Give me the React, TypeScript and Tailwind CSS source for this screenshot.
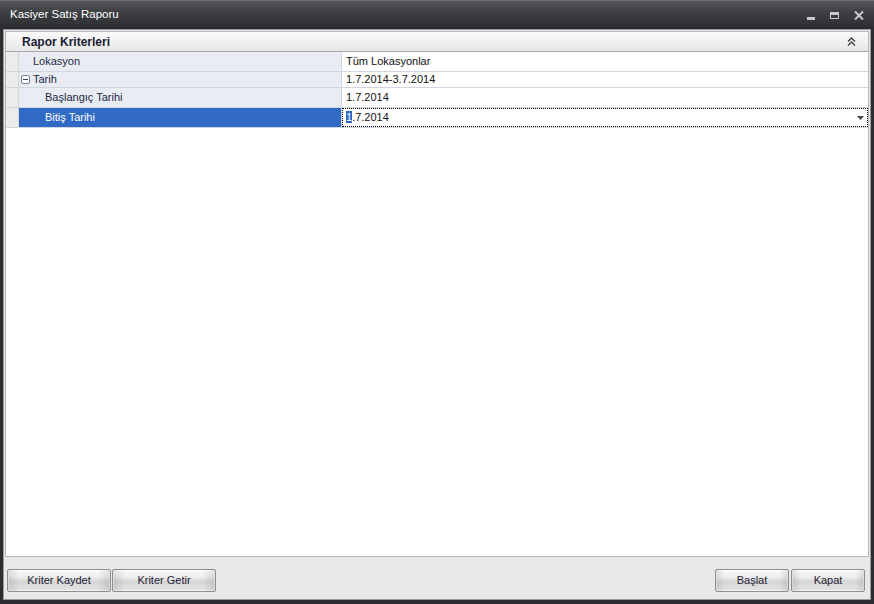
import React from "react";

const font = { fontFamily: '"Liberation Sans", Arial, sans-serif' };

function Btn({ label, w }: { label: string; w: string }) {
  return (
    <div
      className={`${w} h-[23px] flex items-center justify-center rounded-[2px] border border-[#8e8f91] text-[11px] text-[#1e2236] bg-[linear-gradient(to_bottom,#fafafa_0%,#ececec_35%,#d6d6d6_55%,#e4e4e4_100%)] shadow-[inset_0_0_0_1px_rgba(255,255,255,0.6)]`}
    >
      <div className="w-full h-full flex items-center justify-center bg-[linear-gradient(to_right,rgba(0,0,0,0.1)_0%,rgba(0,0,0,0)_12%,rgba(0,0,0,0)_88%,rgba(0,0,0,0.1)_100%)]">
        {label}
      </div>
    </div>
  );
}

function Row({
  label,
  value,
  indent,
  h,
  expander,
  selected,
}: {
  label: string;
  value: React.ReactNode;
  indent: string;
  h: string;
  expander?: boolean;
  selected?: boolean;
}) {
  return (
    <div className={`flex ${h} border-b border-[#d0d6e2]`}>
      <div className="w-[13px] shrink-0 bg-[#ececec] border-r border-[#d6d6d6]" />
      <div
        className={`w-[323px] shrink-0 flex items-center ${indent} border-r border-[#d0d6e2] ${
          selected ? "bg-[#316ac5] text-white" : "bg-[#e9ecf3] text-[#1c2a44]"
        }`}
      >
        {expander && (
          <span className="mr-[3px] -ml-[12px] w-[9px] h-[9px] border border-[#7a8094] rounded-[2px] flex items-center justify-center bg-white">
            <span className="w-[5px] h-[1px] bg-[#3b4154]" />
          </span>
        )}
        {label}
      </div>
      <div className="flex-1 flex items-center bg-white text-[#111]">{value}</div>
    </div>
  );
}

export default function App() {
  return (
    <div
      className="w-[874px] h-[604px] flex flex-col bg-[#2d2e31] text-[11px]"
      style={font}
    >
      {/* title bar */}
      <div className="h-[27px] shrink-0 flex items-center border-t border-[#6f7074] bg-[linear-gradient(to_bottom,#55565a_0%,#3d3e42_45%,#2f3034_100%)]">
        <div className="pl-[10px] text-white text-[11.5px] flex-1 pt-[2px]">
          Kasiyer Satış Raporu
        </div>
        <div className="flex items-center gap-[15px] pr-[10px] pt-[3px]">
          <div className="w-[8px] h-[3px] bg-[#c9cacd] mt-[6px]" />
          <div className="w-[9px] h-[7px] border border-[#c9cacd] border-t-[3px]" />
          <svg width="10" height="9" viewBox="0 0 10 9">
            <path d="M1 0.5 L9 8.5 M9 0.5 L1 8.5" stroke="#c9cacd" strokeWidth="2" />
          </svg>
        </div>
      </div>
      <div className="h-[2px] shrink-0 bg-[#2a2b2e]" />
      {/* body */}
      <div className="flex-1 flex flex-col mx-[3px] mb-[4px] border border-[#9a9a9a] bg-[#e8e8e8]">
        <div className="flex-1 flex flex-col m-[1px] border border-[#b8b8b8] bg-white">
          {/* header */}
          <div className="h-[20px] shrink-0 flex items-center justify-between pl-[16px] pr-[12px] border-b border-[#a9a9a9] bg-[linear-gradient(to_bottom,#fafafa,#e7e7e7)]">
            <span className="font-bold text-[12px] text-[#1b2033]">Rapor Kriterleri</span>
            <svg width="9" height="9" viewBox="0 0 9 9">
              <path d="M1 4.5 L4.5 1 L8 4.5 M1 8.5 L4.5 5 L8 8.5" stroke="#3c3c3c" strokeWidth="1.3" fill="none" />
            </svg>
          </div>
          <Row label="Lokasyon" indent="pl-[14px]" h="h-[20px]" value={<span className="pl-[4px]">Tüm Lokasyonlar</span>} />
          <Row label="Tarih" indent="pl-[14px]" h="h-[16px]" expander value={<span className="pl-[4px]">1.7.2014-3.7.2014</span>} />
          <Row label="Başlangıç Tarihi" indent="pl-[26px]" h="h-[20px]" value={<span className="pl-[4px]">1.7.2014</span>} />
          <Row
            label="Bitiş Tarihi"
            indent="pl-[26px]"
            h="h-[20px]"
            selected
            value={
              <div className="w-full h-full flex items-center border border-dotted border-black">
                <span className="pl-[3px]">
                  <span className="bg-[#316ac5] text-white">1</span>.7.2014
                </span>
                <svg className="ml-auto mr-[3px]" width="7" height="4" viewBox="0 0 7 4">
                  <path d="M0 0 H7 L3.5 4 Z" fill="#444" />
                </svg>
              </div>
            }
          />
          <div className="flex-1" />
        </div>
        {/* footer */}
        <div className="h-[41px] shrink-0 flex items-center justify-between pl-[3px] pr-[5px] pt-[4px] bg-[#e8e8e8]">
          <div className="flex gap-[1px]">
            <Btn label="Kriter Kaydet" w="w-[104px]" />
            <Btn label="Kriter Getir" w="w-[104px]" />
          </div>
          <div className="flex gap-[2px]">
            <Btn label="Başlat" w="w-[74px]" />
            <Btn label="Kapat" w="w-[74px]" />
          </div>
        </div>
      </div>
    </div>
  );
}
